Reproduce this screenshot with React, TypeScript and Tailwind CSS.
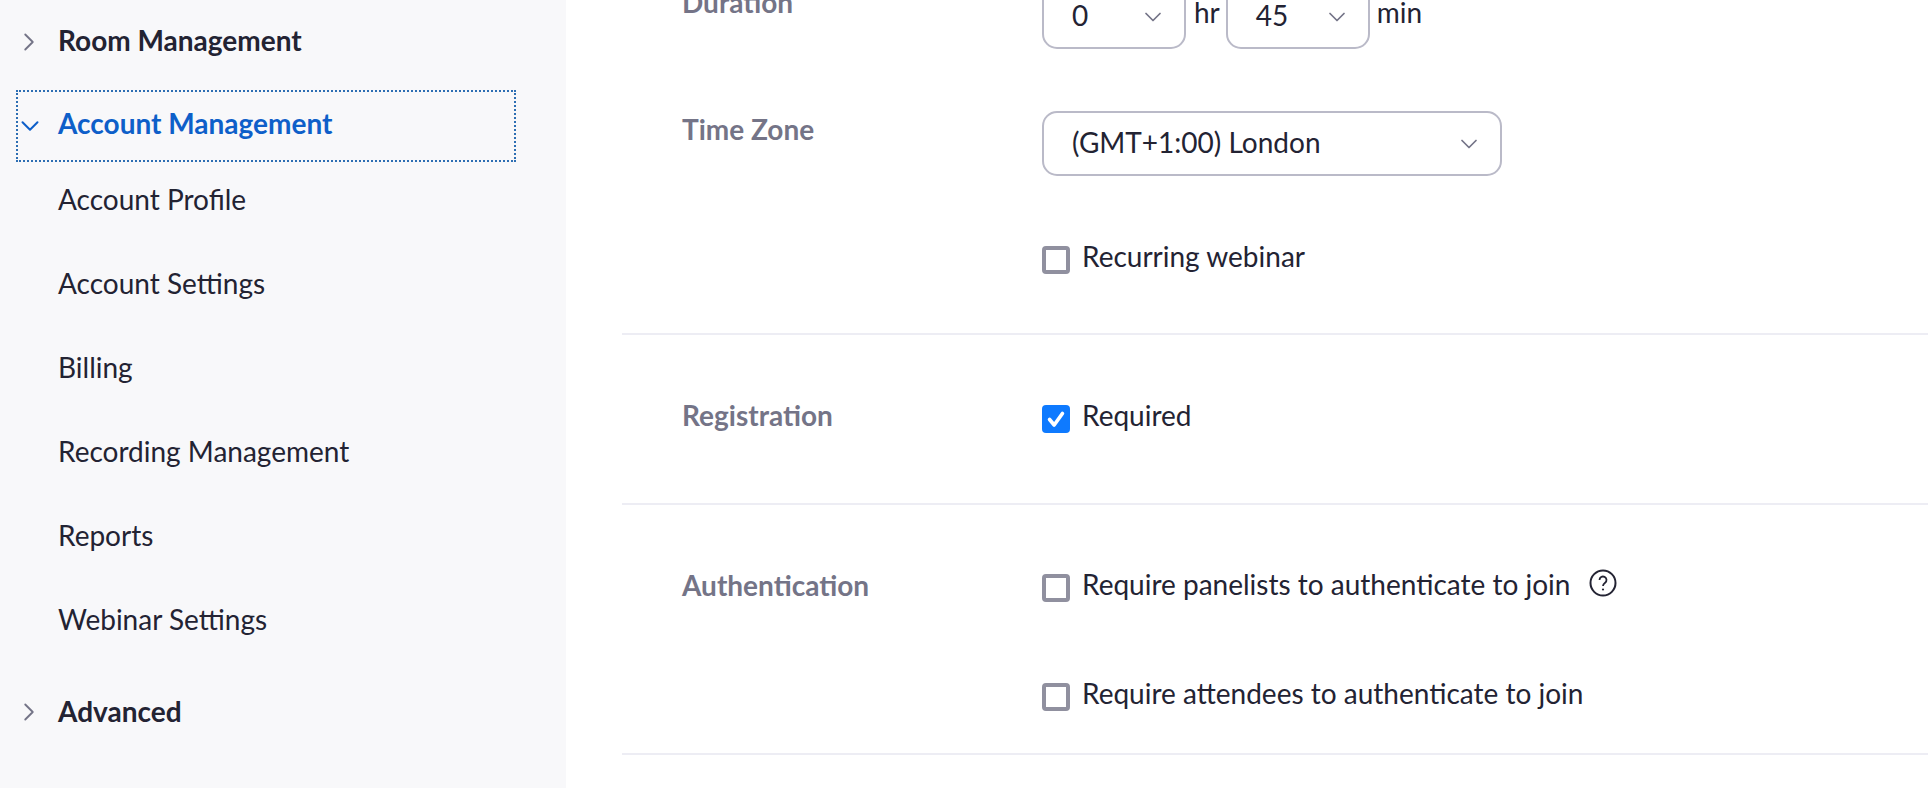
import { ChevronDown, ChevronRight } from 'lucide-react'

const FONT = 'font-["Lato","Noto_Sans",sans-serif]'

const accountItems = ['Account Profile', 'Account Settings', 'Billing', 'Recording Management', 'Reports', 'Webinar Settings']

function Select({ value, className }: { value: string; className: string }) {
  return (
    <div className={`flex h-[65px] items-center justify-between rounded-[15px] border-2 border-[#babac8] pl-[28px] pr-[17px] ${className}`}>
      <span className="-mt-[3px]">{value}</span>
      <ChevronDown className="h-[28px] w-[28px] text-[#747487]" strokeWidth={1.5} />
    </div>
  )
}

function Checkbox({ label, checked }: { label: string; checked?: boolean }) {
  return (
    <label className="flex items-start">
      {checked ? (
        <span className="mt-[2px] flex h-[28px] w-[28px] items-center justify-center rounded-[4px] bg-[#0e7aff]">
          <svg viewBox="0 0 24 24" className="h-[22px] w-[22px]" fill="none" stroke="white" strokeWidth="4" strokeLinecap="round" strokeLinejoin="round">
            <path d="M5 12.5l5 6L19 6" />
          </svg>
        </span>
      ) : (
        <span className="mt-[2px] h-[28px] w-[28px] rounded-[4px] border-[4px] border-[#90909f] bg-white" />
      )}
      <span className="ml-[12px] -mt-[2px] leading-[28px]">{label}</span>
    </label>
  )
}

function Section({ label, children, className, labelClass, divider = true }: { label: string; children: React.ReactNode; className: string; labelClass: string; divider?: boolean }) {
  return (
    <div className={`flex ${divider ? 'border-b-2 border-[#ededf4]' : ''} ${className}`}>
      <div className={`w-[420px] pl-[60px] font-bold leading-[28px] text-[#747487] ${labelClass}`}>{label}</div>
      <div className="flex-1">{children}</div>
    </div>
  )
}

export default function App() {
  return (
    <div className={`flex h-[788px] overflow-hidden bg-white text-[28px] text-[#232333] ${FONT}`}>
      <aside className="w-[566px] shrink-0 bg-[#f8f8fa] pl-[16px] pt-[20px]">
        <div className="flex h-[40px] items-center font-bold">
          <ChevronRight className="-ml-[2px] mt-[4px] h-[30px] w-[30px] text-[#747487]" strokeWidth={1.5} />
          <span className="ml-[14px]">Room Management</span>
        </div>
        <div className="mt-[30px] flex h-[72px] w-[500px] items-start border-2 border-dotted border-[#2d6eb3] pt-[14px] font-bold text-[#0e5fc9]">
          <ChevronDown className="-ml-[3px] mt-[5px] h-[30px] w-[30px]" strokeWidth={1.6} />
          <span className="ml-[13px] leading-[34px]">Account Management</span>
        </div>
        <ul className="-mt-[5px] pl-[42px]">
          {accountItems.map((item) => (
            <li key={item} className="flex h-[84px] items-center">{item}</li>
          ))}
        </ul>
        <div className="mt-[30px] flex h-[40px] items-center font-bold">
          <ChevronRight className="-ml-[2px] mt-[2px] h-[30px] w-[30px] text-[#747487]" strokeWidth={1.5} />
          <span className="ml-[14px]">Advanced</span>
        </div>
      </aside>
      <main className="flex-1 pl-[56px]">
        <div className="-mt-[16px]">
          <Section label="Duration" className="h-[127px]" labelClass="mt-[4px]" divider={false}>
            <div className="flex items-start">
              <Select value="0" className="w-[144px]" />
              <span className="ml-[8px] mt-[7px]">hr</span>
              <Select value="45" className="ml-[6px] w-[144px]" />
              <span className="ml-[7px] mt-[7px]">min</span>
            </div>
          </Section>
          <Section label="Time Zone" className="h-[224px]" labelClass="mt-[4px]">
            <Select value="(GMT+1:00) London" className="w-[460px]" />
            <div className="mt-[68px]">
              <Checkbox label="Recurring webinar" />
            </div>
          </Section>
          <Section label="Registration" className="h-[170px] pt-[68px]" labelClass="-mt-[2px]">
            <Checkbox label="Required" checked />
          </Section>
          <Section label="Authentication" className="h-[250px] pt-[67px]" labelClass="-mt-[1px]">
            <div className="flex items-start">
              <Checkbox label="Require panelists to authenticate to join" />
              <svg viewBox="0 0 28 28" className="ml-[19px] mt-[-3px] h-[28px] w-[28px]" fill="none" stroke="#232333" strokeWidth="2">
                <circle cx="14" cy="14" r="12.5" />
                <path d="M10.5 11a3.5 3.5 0 1 1 5.6 2.8c-1.3 1-2.1 1.6-2.1 3.2" strokeWidth="1.8" />
                <circle cx="14" cy="20.5" r="1.1" fill="#232333" stroke="none" />
              </svg>
            </div>
            <div className="mt-[79px]">
              <Checkbox label="Require attendees to authenticate to join" />
            </div>
          </Section>
        </div>
      </main>
    </div>
  )
}
